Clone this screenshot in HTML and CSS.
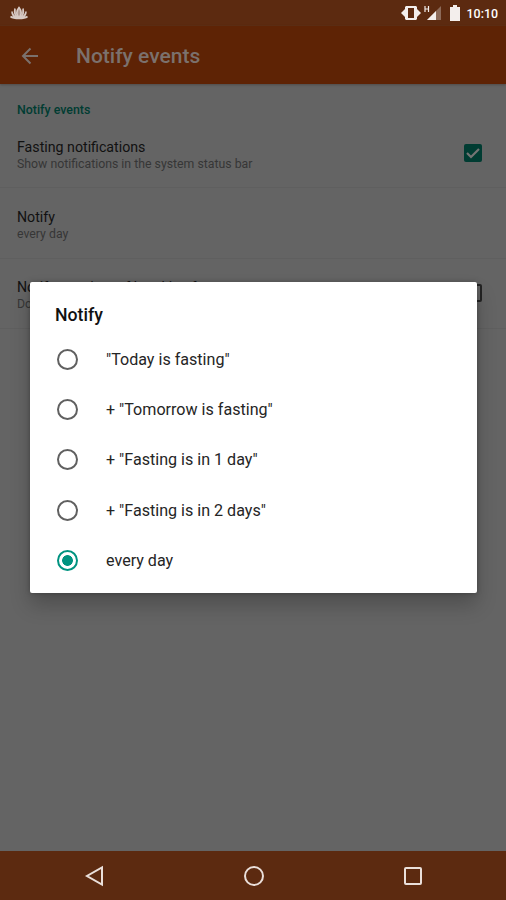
FILE: index.html
```
<!DOCTYPE html>
<html lang="en">
<head>
    <meta charset="UTF-8">
    <meta name="viewport" content="width=device-width, initial-scale=1.0">
    <title>Notify events</title>
    <link rel="stylesheet" href="styles.css">
</head>
<body>
    <div class="screen">
        <header class="status-bar">
            <svg class="lotus" width="20" height="14" viewBox="0 0 20 14">
                <path d="M10 1.500C7 5 7 8 10 12C13 8 13 5 10 1.500ZM6 2.500C5 7 6 10 9 12M14 2.500C15 7 14 10 11 12M3 5.500C3 9 5 11 8 12M17 5.500C17 9 15 11 12 12M1.500 10.500C5 13 15 13 18.500 10.500"/>
            </svg>
            <div class="status-icons">
                <svg class="vibrate" width="20" height="16" viewBox="0 0 20 16">
                    <path d="M0 8L4 4V12ZM20 8L16 4V12Z"/>
                    <path fill-rule="evenodd" d="M5 1H15L16 2V14L15 15H5L4 14V2ZM7 3V13H13V3Z"/>
                </svg>
                <svg class="signal" width="18" height="16" viewBox="0 0 18 16">
                    <path class="signal-off" d="M17 1V15H3Z"/>
                    <path d="M12 6V15H3Z"/>
                    <path class="network" d="M1 1V7M4.500 1V7M1 4H4.500"/>
                </svg>
                <svg class="battery" width="12" height="16" viewBox="0 0 12 16">
                    <path d="M1 2H4V0H8V2H11V16H1Z"/>
                </svg>
                <span class="clock">10:10</span>
            </div>
        </header>

        <div class="app-bar">
            <svg class="back" width="18" height="18" viewBox="0 0 18 18">
                <path d="M17 9H2M9.500 1.500L2 9L9.500 16.500"/>
            </svg>
            <h1>Notify events</h1>
        </div>

        <main class="settings">
            <h2>Notify events</h2>
            <div class="setting">
                <div class="text">
                    <div class="name">Fasting notifications</div>
                    <div class="summary">Show notifications in the system status bar</div>
                </div>
                <svg class="checkbox" width="20" height="20" viewBox="0 0 20 20">
                    <rect class="checked" x="1" y="1" width="18" height="18" rx="2"/>
                    <path class="tick" d="M4 10L8 14L16 6"/>
                </svg>
            </div>
            <div class="setting">
                <div class="text">
                    <div class="name">Notify</div>
                    <div class="summary">every day</div>
                </div>
            </div>
            <div class="setting">
                <div class="text">
                    <div class="name">Notify at a time of breaking fast</div>
                    <div class="summary">Do</div>
                </div>
                <svg class="checkbox" width="20" height="20" viewBox="0 0 20 20">
                    <rect class="unchecked" x="2" y="2" width="16" height="16" rx="1"/>
                </svg>
            </div>
        </main>

        <nav class="nav-bar">
            <svg width="20" height="22" viewBox="0 0 20 22"><path d="M18 2.500V19.500L3 11Z"/></svg>
            <svg width="22" height="22" viewBox="0 0 22 22"><circle cx="11" cy="11" r="9"/></svg>
            <svg width="20" height="20" viewBox="0 0 20 20"><rect x="2" y="2" width="16" height="16" rx="1"/></svg>
        </nav>
    </div>

    <div class="dialog">
        <h3>Notify</h3>
        <label class="option"><span class="radio"></span><span>"Today is fasting"</span></label>
        <label class="option"><span class="radio"></span><span>+ "Tomorrow is fasting"</span></label>
        <label class="option"><span class="radio"></span><span>+ "Fasting is in 1 day"</span></label>
        <label class="option"><span class="radio"></span><span>+ "Fasting is in 2 days"</span></label>
        <label class="option"><span class="radio selected"></span><span>every day</span></label>
    </div>
</body>
</html>
```

FILE: styles.css
```
* {
    box-sizing: border-box;
}
body {
    margin: 0;
    font-family: Roboto, sans-serif;
    overflow: hidden;
}
h1, h2, h3 {
    margin: 0;
    font-weight: 500;
}
svg {
    display: block;
    flex: none;
}
.screen {
    width: 506px;
    height: 900px;
    display: flex;
    flex-direction: column;
    background: #646464;
}
.status-bar {
    height: 26px;
    padding: 0 8px 0 9px;
    display: flex;
    align-items: center;
    justify-content: space-between;
    background: #5c2a10;
    color: #fff;
}
.lotus {
    fill: #b09a92;
    stroke: #d8cac5;
    stroke-width: 1.6;
}
.status-icons {
    display: flex;
    align-items: center;
    fill: #f3eeec;
}
.signal {
    margin-left: 3px;
}
.signal-off {
    fill: #8c6a59;
}
.network {
    fill: none;
    stroke: #f3eeec;
    stroke-width: 1.2;
}
.battery {
    margin-left: 7px;
}
.clock {
    margin-left: 6px;
    font-size: 12.4px;
    font-weight: 500;
}
.app-bar {
    height: 58px;
    padding: 2px 0 0 21px;
    display: flex;
    align-items: center;
    gap: 37px;
    background: #5e2305;
    color: #7b716d;
    box-shadow: 0 1px 2px #504c4a;
}
.app-bar h1 {
    font-size: 21px;
}
.back {
    fill: none;
    stroke: #7b716d;
    stroke-width: 2;
}
.settings {
    flex: 1;
    padding-top: 18px;
}
.settings h2 {
    padding-left: 17px;
    font-size: 12.4px;
    line-height: 16px;
    color: #003c32;
}
.setting {
    height: 70.3px;
    padding: 0 23px 0 17px;
    display: flex;
    align-items: center;
    justify-content: space-between;
    border-bottom: 1px solid #5f5f5f;
}
.text {
    padding-top: 5px;
}
.name {
    font-size: 14.2px;
    line-height: 18px;
    color: #111;
}
.summary {
    font-size: 12.3px;
    line-height: 17px;
    color: #363636;
}
.checked {
    fill: #003c32;
}
.tick {
    fill: none;
    stroke: #747474;
    stroke-width: 2.2;
}
.unchecked {
    fill: none;
    stroke: #242424;
    stroke-width: 2;
}
.nav-bar {
    height: 49px;
    padding: 0 83px 0 84px;
    display: flex;
    align-items: center;
    justify-content: space-between;
    background: #5c2a10;
    fill: none;
    stroke: #eadfda;
    stroke-width: 2;
}
/* dialog sits over the dimmed settings */
.dialog {
    position: absolute;
    left: 30px;
    top: 282px;
    width: 447px;
    height: 311px;
    padding: 20px 25px 0;
    background: #fff;
    border-radius: 2px;
    box-shadow: 0 12px 20px rgba(0, 0, 0, 0.22), 0 0 5px rgba(0, 0, 0, 0.25);
}
.dialog h3 {
    height: 32px;
    font-size: 17.7px;
    line-height: 26px;
    color: #111;
}
.option {
    height: 50.3px;
    padding-left: 2px;
    display: flex;
    align-items: center;
    gap: 28px;
    font-size: 16.1px;
    color: #252525;
}
.radio {
    width: 21px;
    height: 21px;
    border: 2px solid #606060;
    border-radius: 50%;
}
.selected {
    border-color: #009380;
    background: radial-gradient(circle, #009380 5px, #fff 5.700px);
}
```
